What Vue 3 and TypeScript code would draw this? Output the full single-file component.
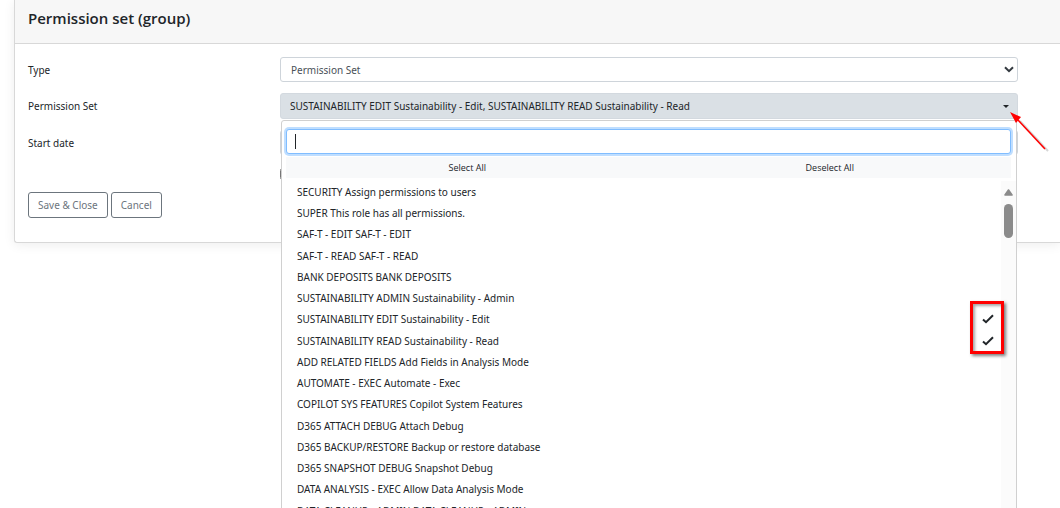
<script setup lang="ts">
import { ref } from 'vue'

interface PermissionSet {
  name: string
  selected: boolean
}

const type = ref('Permission Set')
const search = ref('')
const startDate = ref('')
const noEndDate = ref(false)

const picked = ['SUSTAINABILITY EDIT Sustainability - Edit', 'SUSTAINABILITY READ Sustainability - Read']

const sets = ref<PermissionSet[]>(
  [
    'SECURITY Assign permissions to users',
    'SUPER This role has all permissions.',
    'SAF-T - EDIT SAF-T - EDIT',
    'SAF-T - READ SAF-T - READ',
    'BANK DEPOSITS BANK DEPOSITS',
    'SUSTAINABILITY ADMIN Sustainability - Admin',
    'SUSTAINABILITY EDIT Sustainability - Edit',
    'SUSTAINABILITY READ Sustainability - Read',
    'ADD RELATED FIELDS Add Fields in Analysis Mode',
    'AUTOMATE - EXEC Automate - Exec',
    'COPILOT SYS FEATURES Copilot System Features',
    'D365 ATTACH DEBUG Attach Debug',
    'D365 BACKUP/RESTORE Backup or restore database',
    'D365 SNAPSHOT DEBUG Snapshot Debug',
    'DATA ANALYSIS - EXEC Allow Data Analysis Mode',
    'DATA CLEANUP - ADMIN DATA CLEANUP - ADMIN',
  ].map((name) => ({ name, selected: picked.includes(name) })),
)

function setAll(value: boolean) {
  sets.value.forEach((s) => (s.selected = value))
}
</script>

<template>
  <main class="page">
    <section class="card">
      <header class="card-header">
        <h1>Permission set (group)</h1>
      </header>
      <form class="card-body" @submit.prevent>
        <div class="row">
          <label for="type">Type</label>
          <div class="select-wrap">
            <select id="type" v-model="type" class="control">
              <option>Permission Set</option>
            </select>
            <svg class="chevron" viewBox="0 0 10 7" aria-hidden="true">
              <path d="M1 1.2 5 5.2 9 1.2" fill="none" stroke="#343a40" stroke-width="2" />
            </svg>
          </div>
        </div>

        <div class="row">
          <label for="permission">Permission Set</label>
          <div class="picker">
            <button id="permission" type="button" class="picker-button" aria-expanded="true">
              <span>{{ picked.join(', ') }}</span>
              <i class="caret-down"></i>
            </button>
            <div class="menu">
              <div class="search">
                <input v-model="search" type="text" class="search-input" aria-label="Search" />
                <i class="text-cursor"></i>
              </div>
              <div class="actions">
                <button type="button" @click="setAll(true)">Select All</button>
                <button type="button" @click="setAll(false)">Deselect All</button>
              </div>
              <div class="options">
                <ul>
                  <li v-for="s in sets" :key="s.name">
                    <a href="#" @click.prevent="s.selected = !s.selected">
                      <span>{{ s.name }}</span>
                      <svg v-if="s.selected" class="tick" viewBox="0 0 12 10" aria-hidden="true">
                        <path d="M1 5.4 4 8.2 11 1.2" fill="none" stroke="#212529" stroke-width="2" />
                      </svg>
                    </a>
                  </li>
                </ul>
                <div class="scrollbar" aria-hidden="true">
                  <svg class="scroll-up" viewBox="0 0 9 7">
                    <path d="M4.5 1 8 6H1Z" fill="#8b8b8b" stroke="#8b8b8b" stroke-width="1.6" stroke-linejoin="round" />
                  </svg>
                  <i class="thumb"></i>
                </div>
              </div>
              <i class="highlight"></i>
            </div>
            <svg class="pointer" viewBox="0 0 40 42" aria-hidden="true">
              <path d="M8 8 36 38" stroke="#999" stroke-opacity=".4" stroke-width="2" transform="translate(2 1)" />
              <path d="M8 8 35 37" stroke="#f00" stroke-width="1.6" />
              <path d="M0 0 11 5 6 11Z" fill="#f00" />
            </svg>
          </div>
        </div>

        <div class="row">
          <label for="start">Start date</label>
          <input id="start" v-model="startDate" type="text" class="control" />
        </div>
        <div class="row check-row">
          <input v-model="noEndDate" type="checkbox" aria-label="No end date" />
        </div>

        <div class="buttons">
          <button type="submit">Save &amp; Close</button>
          <button type="button">Cancel</button>
        </div>
      </form>
    </section>
  </main>
</template>

<style>
html,
body {
  background: #fff;
}
</style>

<style scoped>
* {
  box-sizing: border-box;
}

.page {
  height: 100vh;
  overflow: hidden;
  padding-left: 14px;
  color: #212529;
  font: 10px/16px 'Noto Sans', 'Open Sans', sans-serif;
}

button,
input,
select {
  margin: 0;
  font: inherit;
  color: inherit;
}

.card {
  border: 1px solid #d8d8d8;
  border-top: 0;
  border-right: 0;
  border-radius: 0 0 0 3px;
  box-shadow: 0 2px 12px rgba(0, 0, 0, 0.07);
}

.card-header {
  padding: 7px 13px 14px;
  border-bottom: 1px solid #d8d8d8;
  background: #f7f7f7;
}

h1 {
  margin: 0;
  font-family: 'Open Sans', 'Noto Sans', sans-serif;
  font-size: 15px;
  font-weight: 600;
  line-height: 22px;
}

.card-body {
  display: flex;
  flex-direction: column;
  gap: 11px;
  padding: 13px 42px 24px 13px;
}

.row {
  display: grid;
  grid-template-columns: 252px 1fr;
  align-items: center;
}

.control {
  display: block;
  width: 100%;
  height: 25px;
  padding: 0 10px;
  border: 1px solid #ced4da;
  border-radius: 3px;
  background: #fff;
  color: #495057;
  appearance: none;
}

.select-wrap,
.picker {
  position: relative;
}

.chevron {
  position: absolute;
  top: 9px;
  right: 4px;
  width: 10px;
  height: 7px;
}

.picker-button {
  display: flex;
  align-items: center;
  justify-content: space-between;
  width: 100%;
  height: 26px;
  padding: 0 8px 0 9px;
  border: 1px solid #d3d9df;
  border-radius: 3px;
  background: #dae0e5;
}

.caret-down {
  border: 3px solid transparent;
  border-top-color: #212529;
  border-bottom: 0;
}

.menu {
  position: absolute;
  z-index: 2;
  top: 27px;
  left: 1px;
  right: 1px;
  padding-top: 8px;
  border: 1px solid #d0d0d0;
  border-radius: 3px;
  background: #fff;
}

.search {
  position: relative;
  margin: 0 5px 0 4px;
}

.search-input {
  display: block;
  width: 100%;
  height: 25px;
  padding: 0 9px;
  border: 1px solid #80bdff;
  border-radius: 3px;
  outline: 0;
  box-shadow: 0 0 0 2px #bfdeff;
}

.text-cursor {
  position: absolute;
  top: 5px;
  left: 9px;
  width: 1px;
  height: 15px;
  background: #212529;
}

.actions {
  display: grid;
  grid-template-columns: 1fr 1fr;
  margin: 3px 5px 3px 4px;
}

.actions button {
  height: 21px;
  padding: 0;
  border: 0;
  background: #f8f9fa;
  font-family: 'Open Sans', 'Noto Sans', sans-serif;
  font-size: 9px;
}

.options {
  display: flex;
}

ul {
  display: grid;
  flex: 1;
  grid-auto-rows: 21px 21px 22px 21px;
  margin: 0;
  padding: 0;
  list-style: none;
}

li a {
  display: flex;
  align-items: center;
  justify-content: space-between;
  height: 21px;
  padding: 0 7px 0 15px;
  color: #212529;
  text-decoration: none;
}

.tick {
  width: 12px;
  height: 10px;
}

.scrollbar {
  display: flex;
  flex-direction: column;
  align-items: center;
  gap: 8px;
  width: 15px;
  padding-top: 8px;
  background: #fbfbfb;
}

.scroll-up {
  width: 9px;
  height: 7px;
}

.thumb {
  width: 9px;
  height: 34px;
  border-radius: 5px;
  background: #8b8b8b;
}

.highlight {
  position: absolute;
  top: 180px;
  right: 12px;
  width: 34px;
  height: 53px;
  border: 3px solid #f00;
  box-shadow: 2px 2px 3px rgba(0, 0, 0, 0.5), inset 2px 2px 3px rgba(0, 0, 0, 0.35);
}

.pointer {
  position: absolute;
  z-index: 3;
  top: 19px;
  right: -32px;
  width: 40px;
  height: 42px;
}

.check-row {
  height: 15px;
}

.check-row input {
  grid-column: 2;
  width: 12px;
  height: 12px;
}

.buttons {
  display: flex;
  gap: 3px;
}

.buttons button {
  height: 26px;
  padding: 0 9px;
  border: 1px solid #6c757d;
  border-radius: 3px;
  background: #fff;
  color: #6c757d;
}
</style>
